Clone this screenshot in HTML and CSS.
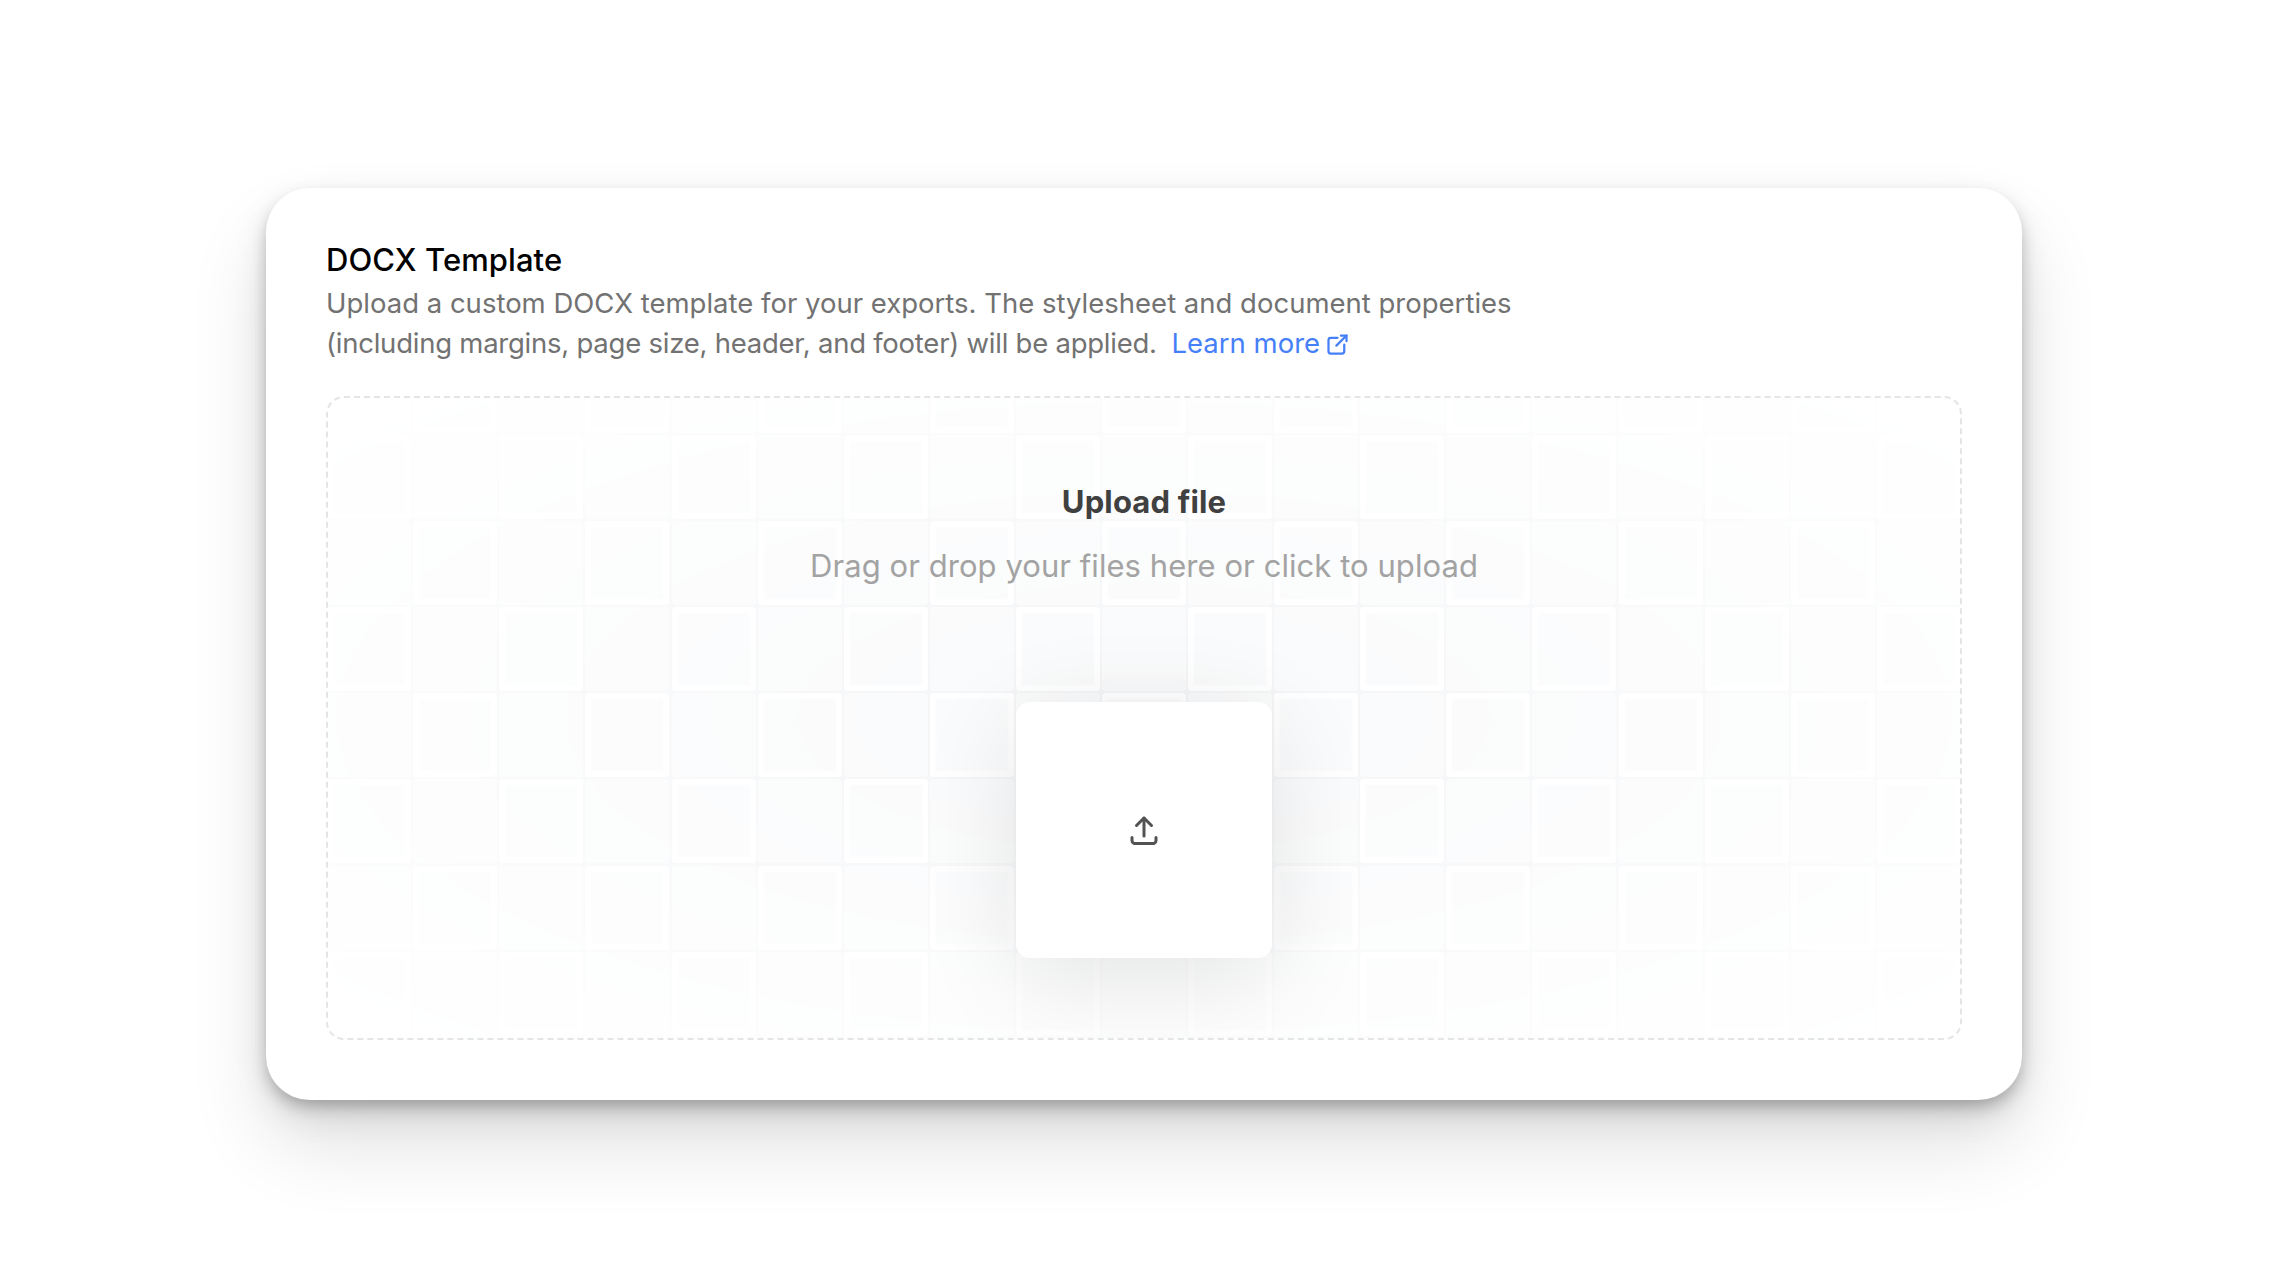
FILE: index.html
```html
<!DOCTYPE html>
<html lang="en">
<head>
<meta charset="utf-8">
<title>DOCX Template</title>
<link rel="stylesheet" href="styles.css">
</head>
<body>
<main class="card">
  <h1 class="title">DOCX Template</h1>
  <p class="desc">Upload a custom DOCX template for your exports. The stylesheet and document properties<br><span class="desc-second">(including margins, page size, header, and footer) will be applied.</span> <a class="learn" href="#">Learn more<svg class="ext" viewBox="0 0 24 24" fill="none" stroke="currentColor" stroke-width="2" stroke-linecap="round" stroke-linejoin="round"><path d="M12 6h-6a2 2 0 0 0 -2 2v10a2 2 0 0 0 2 2h10a2 2 0 0 0 2 -2v-6"/><path d="M11 13l9 -9"/><path d="M15 4h5v5"/></svg></a></p>
  <section class="drop">
    <div class="pattern"><div class="cells">
      <i></i><i></i><i></i><i></i><i></i><i></i><i></i><i></i><i></i><i></i><i></i><i></i><i></i><i></i><i></i><i></i><i></i><i></i><i></i><i></i><i></i>
      <i></i><i></i><i></i><i></i><i></i><i></i><i></i><i></i><i></i><i></i><i></i><i></i><i></i><i></i><i></i><i></i><i></i><i></i><i></i><i></i><i></i>
      <i></i><i></i><i></i><i></i><i></i><i></i><i></i><i></i><i></i><i></i><i></i><i></i><i></i><i></i><i></i><i></i><i></i><i></i><i></i><i></i><i></i>
      <i></i><i></i><i></i><i></i><i></i><i></i><i></i><i></i><i></i><i></i><i></i><i></i><i></i><i></i><i></i><i></i><i></i><i></i><i></i><i></i><i></i>
      <i></i><i></i><i></i><i></i><i></i><i></i><i></i><i></i><i></i><i></i><i></i><i></i><i></i><i></i><i></i><i></i><i></i><i></i><i></i><i></i><i></i>
      <i></i><i></i><i></i><i></i><i></i><i></i><i></i><i></i><i></i><i></i><i></i><i></i><i></i><i></i><i></i><i></i><i></i><i></i><i></i><i></i><i></i>
      <i></i><i></i><i></i><i></i><i></i><i></i><i></i><i></i><i></i><i></i><i></i><i></i><i></i><i></i><i></i><i></i><i></i><i></i><i></i><i></i><i></i>
      <i></i><i></i><i></i><i></i><i></i><i></i><i></i><i></i><i></i><i></i><i></i><i></i><i></i><i></i><i></i><i></i><i></i><i></i><i></i><i></i><i></i>
      <i></i><i></i><i></i><i></i><i></i><i></i><i></i><i></i><i></i><i></i><i></i><i></i><i></i><i></i><i></i><i></i><i></i><i></i><i></i><i></i><i></i>
    </div></div>
    <div class="drop-body">
      <h2 class="drop-title">Upload file</h2>
      <p class="drop-sub">Drag or drop your files here or click to upload</p>
      <div class="tile">
        <svg class="up" viewBox="0 0 24 24" fill="none" stroke="currentColor" stroke-width="2" stroke-linecap="round" stroke-linejoin="round"><path d="M4 17v2a2 2 0 0 0 2 2h12a2 2 0 0 0 2 -2v-2"/><path d="M7 9l5 -5l5 5"/><path d="M12 4l0 12"/></svg>
      </div>
    </div>
  </section>
</main>
</body>
</html>
```
FILE: styles.css
```css
* { box-sizing: border-box; }
html, body { height: 100%; }
body {
  margin: 0;
  background: #fff;
  display: flex;
  align-items: center;
  justify-content: center;
  font-family: "Inter", "Liberation Sans", sans-serif;
}
.card {
  width: 1756px;
  height: 912px;
  padding: 52px 60px 60px;
  background: #fff;
  border-radius: 44px;
  box-shadow: 0 8px 16px -2px rgba(0,0,0,.26), 0 14px 34px rgba(0,0,0,.1), 0 44px 80px rgba(0,0,0,.12);
}
.title {
  margin: 0;
  font-size: 31px;
  line-height: 40px;
  font-weight: 500;
  letter-spacing: 0.08px;
  color: #000;
}
.desc {
  margin: 3px 0 0;
  font-size: 27.5px;
  line-height: 40px;
  font-weight: 400;
  color: #727272;
}
.desc-second { letter-spacing: -0.24px; }
.learn {
  margin-left: 7px;
  color: #4680f8;
  text-decoration: none;
}
.ext {
  width: 27px;
  height: 27px;
  margin-left: 4px;
  vertical-align: -5px;
}
.drop {
  position: relative;
  height: 644px;
  margin-top: 33px;
  border: 2px dashed #e5e5e5;
  border-radius: 18px;
  overflow: hidden;
}
.pattern {
  position: absolute;
  inset: 0;
  display: flex;
  justify-content: center;
  -webkit-mask-image: radial-gradient(ellipse at center, #fff, transparent);
  mask-image: radial-gradient(ellipse at center, #fff, transparent);
}
.cells {
  flex: none;
  display: grid;
  grid-template-columns: repeat(21, 84px);
  grid-auto-rows: 84px;
  gap: 2.1px;
  height: max-content;
  margin-top: -49px;
  background: #f3f4f6;
}
.cells i { display: block; background: #f9fafb; border-radius: 4px; }
.cells i:nth-child(odd) { box-shadow: inset 0 0 2px 6px #fff; }
.drop-body {
  position: relative;
  display: flex;
  flex-direction: column;
  align-items: center;
  padding-top: 84px;
}
.drop-title {
  margin: 0;
  font-size: 31px;
  line-height: 40px;
  font-weight: 700;
  letter-spacing: 0.15px;
  color: #404040;
}
.drop-sub {
  margin: 24px 0 0;
  font-size: 31px;
  line-height: 40px;
  font-weight: 400;
  letter-spacing: 0.06px;
  color: #a3a3a3;
}
.tile {
  width: 256px;
  height: 256px;
  margin-top: 116px;
  display: flex;
  align-items: center;
  justify-content: center;
  background: #fff;
  border-radius: 14px;
  box-shadow: 0 20px 100px rgba(0,0,0,.1);
}
.up { width: 36px; height: 36px; color: #525252; }
```
